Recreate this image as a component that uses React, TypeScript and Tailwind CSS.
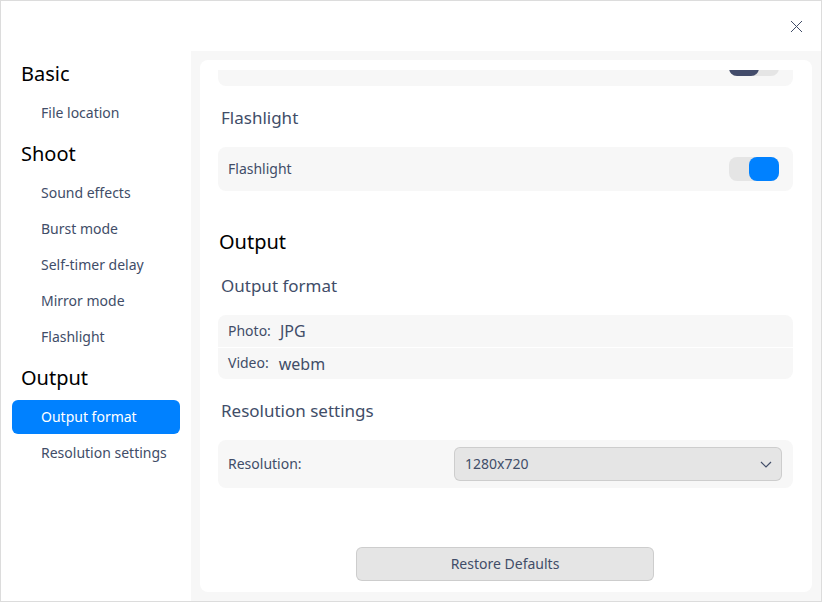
import React from 'react';

const FONT = { fontFamily: '"Noto Sans", "Open Sans", sans-serif' };

// Barre latérale de navigation
const NAV = [
  { title: 'Basic', items: ['File location'] },
  { title: 'Shoot', items: ['Sound effects', 'Burst mode', 'Self-timer delay', 'Mirror mode', 'Flashlight'] },
  { title: 'Output', items: ['Output format', 'Resolution settings'] },
];

function Toggle({ on }: { on: boolean }) {
  return (
    <div className={`w-[50px] h-[24px] rounded-[8px] bg-[#e5e5e5] flex ${on ? 'justify-end' : 'justify-start'}`}>
      <div className={`w-[30px] h-[24px] rounded-[8px] ${on ? 'bg-[#0081ff]' : 'bg-[#434c6b]'}`} />
    </div>
  );
}

function SubHeading({ children, className = '' }: { children: React.ReactNode; className?: string }) {
  return (
    <div className={`h-[40px] flex items-center pl-[3px] text-[17px] text-[#414d68] ${className}`}>{children}</div>
  );
}

export default function App() {
  const selected = 'Output format';

  return (
    <div
      style={FONT}
      className="w-[822px] h-[602px] border border-[#dcdcdc] bg-white flex flex-col overflow-hidden"
    >
      {/* Barre de titre */}
      <div className="h-[50px] flex items-center justify-end pr-[18px] shrink-0">
        <svg width="13" height="13" viewBox="0 0 13 13" className="text-[#414d68]">
          <path d="M1 1L12 12M12 1L1 12" stroke="currentColor" strokeWidth="1" fill="none" />
        </svg>
      </div>

      <div className="flex flex-1 min-h-0">
        <div className="w-[190px] shrink-0 px-[11px] pt-[3px]">
          {NAV.map((group, gi) => (
            <div key={group.title}>
              <div className={`h-[40px] flex items-center pl-[9px] text-[20px] text-black ${gi > 0 ? 'mt-[4px]' : ''}`}>
                {group.title}
              </div>
              {group.items.map((item) => (
                <div
                  key={item}
                  className={`h-[34px] mt-[2px] pl-[29px] pb-[2px] rounded-[6px] flex items-center text-[14px] ${
                    item === selected ? 'bg-[#0081ff] text-white' : 'text-[#414d68]'
                  }`}
                >
                  {item}
                </div>
              ))}
            </div>
          ))}
        </div>

        <div className="flex-1 bg-[#f7f7f7] p-[9px] flex min-w-0">
          <div className="flex-1 bg-white rounded-[8px] flex flex-col pt-[10px] min-w-0">
            <div className="flex-1 min-h-0 overflow-hidden pl-[18px] pr-[19px]">
              {/* Ligne précédente, partiellement masquée par le défilement */}
              <div className="-mt-[28px] h-[44px] rounded-[8px] bg-[#f7f7f7] flex items-center justify-end pr-[14px]">
                <Toggle on={false} />
              </div>

              <SubHeading className="mt-[12px]">Flashlight</SubHeading>
              <div className="mt-[9px] h-[44px] rounded-[8px] bg-[#f7f7f7] flex items-center justify-between pl-[10px] pr-[14px]">
                <span className="relative -top-px text-[14px] text-[#414d68]">Flashlight</span>
                <Toggle on={true} />
              </div>

              <div className="mt-[31px] h-[40px] flex items-center pl-[1px] text-[20px] text-black">Output</div>
              <SubHeading className="mt-[4px]">Output format</SubHeading>
              <div className="mt-[9px] rounded-[8px] overflow-hidden flex flex-col gap-[1px]">
                <div className="h-[32px] bg-[#f7f7f7] flex items-center pl-[10px] text-[#414d68]">
                  <span className="relative -top-px text-[14px]">Photo:</span>
                  <span className="ml-[9px] text-[16px]">JPG</span>
                </div>
                <div className="h-[31px] bg-[#f7f7f7] flex items-center pl-[10px] text-[#414d68]">
                  <span className="relative -top-px text-[14px]">Video:</span>
                  <span className="ml-[10px] text-[16px]">webm</span>
                </div>
              </div>

              <SubHeading className="mt-[12px]">Resolution settings</SubHeading>
              <div className="mt-[9px] h-[48px] rounded-[8px] bg-[#f7f7f7] flex items-center pl-[10px] pr-[11px]">
                <span className="relative -top-px w-[226px] text-[14px] text-[#414d68]">Resolution:</span>
                <div className="flex-1 h-[34px] rounded-[6px] bg-[#e5e5e5] border border-black/10 flex items-center justify-between pl-[10px] pr-[8px] text-[14px] text-[#414d68]">
                  <span className="relative -top-px">1280x720</span>
                  <svg width="14" height="14" viewBox="0 0 14 14">
                    <path d="M2 5L7 10L12 5" stroke="#414d68" strokeWidth="1.2" fill="none" />
                  </svg>
                </div>
              </div>
            </div>

            <div className="shrink-0 flex justify-center pt-[12px] pb-[11px] pr-[2px]">
              <button className="w-[298px] h-[34px] pb-[2px] rounded-[6px] bg-[#e5e5e5] border border-black/10 text-[14px] text-[#414d68]">
                Restore Defaults
              </button>
            </div>
          </div>
        </div>
      </div>
    </div>
  );
}
